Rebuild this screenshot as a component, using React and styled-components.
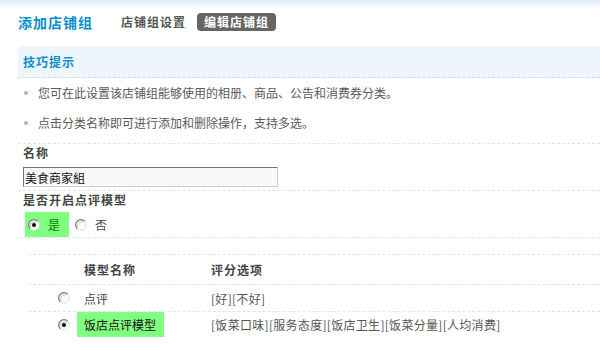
import React from "react";
import styled, { createGlobalStyle } from "styled-components";

const GlobalStyle = createGlobalStyle`
  html, body { margin: 0; padding: 0; background: #fff; }
  body {
    font-family: "Noto Sans CJK SC", "Noto Sans", sans-serif;
    font-size: 12px;
    color: #555;
  }
  * { box-sizing: border-box; }
`;

const Page = styled.div`
  width: 600px;
  height: 350px;
  overflow: hidden;
  background: linear-gradient(to bottom, #e4edf6 0, #ffffff 9px);
`;

const Header = styled.div`
  display: flex;
  align-items: center;
  height: 44px;
  padding-left: 18px;
  margin-bottom: 2px;
`;

const Title = styled.h1`
  margin: 0;
  font-size: 14px;
  font-weight: 700;
  letter-spacing: 1px;
  color: #0b8fcb;
  line-height: 18px;
`;

const Tab = styled.span`
  display: inline-flex;
  align-items: center;
  height: 18px;
  font-weight: 700;
  letter-spacing: 1px;
  line-height: 18px;
  border-radius: 4px;
  padding: ${(p) => (p.$active ? "0 7px" : "0")};
  margin-left: ${(p) => p.$gap}px;
  color: ${(p) => (p.$active ? "#fff" : "#555")};
  background: ${(p) => (p.$active ? "#666" : "transparent")};
`;

const TipBox = styled.div`
  margin-left: 18px;
  height: 32px;
  background: #eef5fc;
  border-bottom: 1px dashed #d6dadf;
  padding-left: 5px;
  line-height: 31px;
  font-weight: 700;
  letter-spacing: 1px;
  color: #0b8fcb;
`;

const TipList = styled.ul`
  list-style: none;
  margin: 0 0 0 18px;
  padding: 0 0 5px 0;
`;

const TipItem = styled.li`
  position: relative;
  height: 30px;
  line-height: 30px;
  padding-left: 20px;
  color: #5a5a5a;
  &::before {
    content: "";
    position: absolute;
    left: 6px;
    top: 13px;
    width: 4px;
    height: 4px;
    border-radius: 50%;
    background: #b4b4b4;
  }
`;

const Section = styled.div`
  margin-left: 18px;
  border-top: 1px dashed #d6e6f4;
  padding: 0 0 ${(p) => p.$pb || 0}px 5px;
`;

const Label = styled.div`
  height: 18px;
  line-height: 18px;
  font-weight: 700;
  letter-spacing: 1px;
  color: #444;
`;

const TextInput = styled.input`
  display: block;
  margin-top: 5px;
  width: 255px;
  height: 20px;
  padding: 0 1px;
  border-style: solid;
  border-width: 1px;
  border-color: #777 #ccc #ccc #777;
  background: #f9f9f9;
  font-family: "Noto Sans CJK SC", sans-serif;
  font-size: 12px;
  color: #111;
  outline: none;
`;

const RadioRow = styled.div`
  display: flex;
  margin-top: 3px;
  height: 25px;
`;

const RadioOption = styled.label`
  display: inline-flex;
  align-items: center;
  gap: 8px;
  height: 25px;
  padding: 0 9px 0 3px;
  margin-left: ${(p) => p.$ml}px;
  background: ${(p) => (p.$on ? "#80ff80" : "transparent")};
  color: ${(p) => (p.$on ? "#008000" : "#444")};
`;

const Table = styled.div`
  margin: 16px 0 0 28px;
`;

const Row = styled.div`
  display: grid;
  grid-template-columns: 49px 127px 1fr;
  align-items: center;
  height: ${(p) => p.$h}px;
  border-top: 1px dashed #d6e6f4;
`;

const RadioCell = styled.div`
  display: flex;
  align-items: center;
  padding-left: 30px;
  height: 100%;
`;

const HeadCell = styled.div`
  padding-left: 7px;
  font-weight: 700;
  letter-spacing: 1px;
  color: #444;
`;

const NameCell = styled.div`
  height: 100%;
  display: flex;
  align-items: center;
`;

const NameLabel = styled.span`
  display: inline-flex;
  align-items: center;
  height: 100%;
  padding: 0 8px 0 7px;
  background: ${(p) => (p.$on ? "#80ff80" : "transparent")};
  color: ${(p) => (p.$on ? "#111" : "#444")};
`;

const ScoreCell = styled.div`
  padding-left: 7px;
  letter-spacing: 0.3px;
  color: #555;
`;

const Radio = ({ checked }) => (
  <svg width="12" height="12" viewBox="0 0 12 12">
    <circle cx="6" cy="6" r="5.3" fill="#fbfbf8" stroke="#e4e0d6" strokeWidth="1" />
    <path d="M2.2 9.8 A5.3 5.3 0 0 1 9.8 2.2" fill="none" stroke="#7a7a7a" strokeWidth="1.2" />
    <path d="M3 8.6 A4.2 4.2 0 0 1 8.6 3" fill="none" stroke="#b8b8b0" strokeWidth="0.8" />
    {checked && <circle cx="6" cy="6" r="2" fill="#000" />}
  </svg>
);

export default function App() {
  return (
    <>
      <GlobalStyle />
      <Page>
        <Header>
          <Title>添加店铺组</Title>
          <Tab $gap={28}>店铺组设置</Tab>
          <Tab $gap={11} $active>编辑店铺组</Tab>
        </Header>
        <TipBox>技巧提示</TipBox>
        <TipList>
          <TipItem>您可在此设置该店铺组能够使用的相册、商品、公告和消费券分类。</TipItem>
          <TipItem>点击分类名称即可进行添加和删除操作，支持多选。</TipItem>
        </TipList>
        <Section $pb={3}>
          <Label>名称</Label>
          <TextInput defaultValue="美食商家組" />
        </Section>
        <Section>
          <Label>是否开启点评模型</Label>
          <RadioRow>
            <RadioOption $on $ml={2}>
              <Radio checked />
              是
            </RadioOption>
            <RadioOption $ml={3}>
              <Radio />
              否
            </RadioOption>
          </RadioRow>
        </Section>
        <Section />
        <Table>
          <Row $h={30}>
            <RadioCell />
            <HeadCell>模型名称</HeadCell>
            <HeadCell>评分选项</HeadCell>
          </Row>
          <Row $h={27}>
            <RadioCell>
              <Radio />
            </RadioCell>
            <NameCell>
              <NameLabel>点评</NameLabel>
            </NameCell>
            <ScoreCell>[好][不好]</ScoreCell>
          </Row>
          <Row $h={26}>
            <RadioCell>
              <Radio checked />
            </RadioCell>
            <NameCell>
              <NameLabel $on>饭店点评模型</NameLabel>
            </NameCell>
            <ScoreCell>[饭菜口味][服务态度][饭店卫生][饭菜分量][人均消费]</ScoreCell>
          </Row>
        </Table>
      </Page>
    </>
  );
}
